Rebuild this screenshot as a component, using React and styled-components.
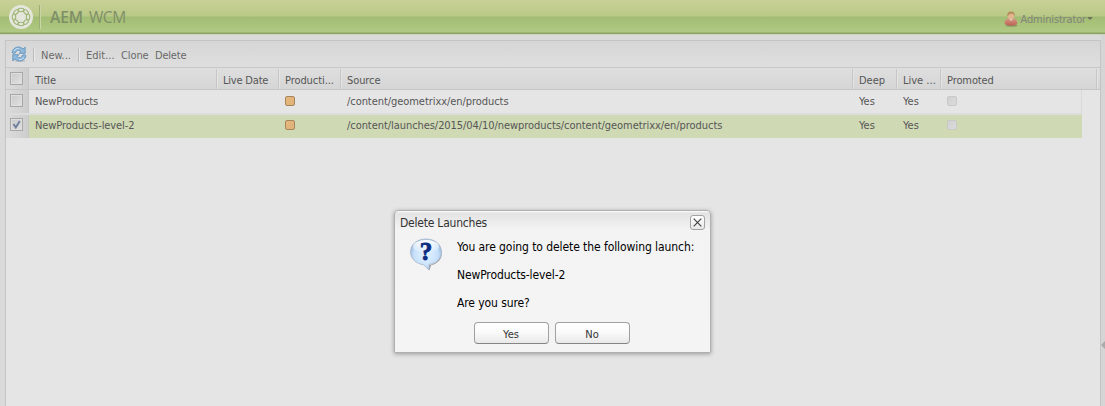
import React from 'react';
import styled, { createGlobalStyle } from 'styled-components';

const Global = createGlobalStyle`
  *, *::before, *::after { box-sizing: border-box; }
  body {
    margin: 0;
    background: #dadada;
    overflow: hidden;
    font: 11px/14px "DejaVu Sans Condensed", "DejaVu Sans", sans-serif;
    font-stretch: condensed;
    color: #565656;
  }
`;

const Page = styled.div`
  height: 406px;
  display: flex;
  flex-direction: column;
`;

const Header = styled.header`
  height: 35px;
  flex: none;
  display: flex;
  align-items: center;
  padding: 0 12px 1px 9px;
  background: linear-gradient(#c9d096 0, #b9c987 16px, #a2bd73 17px, #b0c984 32px, #8ba366 33px, #8ba366 34px, #cbd3bd 34px);
`;

const HeaderRule = styled.i`
  width: 2px;
  height: 24px;
  margin: 0 9px 0 6px;
  background: #9cae75;
  border-right: 1px solid #c9d5a5;
`;

const Brand = styled.h1`
  flex: 1;
  margin: 0;
  display: flex;
  gap: 6px;
  font: 400 15.5px/20px "Open Sans", "Noto Sans", sans-serif;
  color: #7f8f68;
  b { font-weight: 600; letter-spacing: -0.1px; }
  span { letter-spacing: -0.4px; }
`;

const User = styled.div`
  display: flex;
  align-items: center;
  color: #83837b;
  margin-top: 3px;
  letter-spacing: ${p => p.$track}px;
  svg { display: block; }
  span { margin: 3px 1px 0 3px; }
`;

const Caret = styled.i`
  border: 3px solid transparent;
  border-top-color: #6c725c;
  border-bottom: 0;
`;

const Workspace = styled.div`
  flex: 1;
  display: flex;
  padding: 5px 0 0 5px;
`;

const Panel = styled.main`
  width: 1096px;
  border: 1px solid #c4c4c4;
  border-bottom: 0;
  background: #e5e5e5;
`;

const Splitter = styled.aside`
  flex: 1;
  margin-top: -5px;
  background: #d5d5d5;
  display: flex;
  padding-top: 306px;
`;

const SplitterArrow = styled.i`
  width: 4px;
  height: 8px;
  border: 4px solid transparent;
  border-right-color: #aaa;
  border-left: 0;
`;

const Toolbar = styled.div`
  height: 27px;
  display: flex;
  align-items: center;
  padding: 0 0 0 5px;
  background: linear-gradient(#d6d6d6, #dedede);
  border-bottom: 1px solid #c8c8c8;
  color: #696969;
`;

const ToolbarRule = styled.i`
  width: 2px;
  height: 14px;
  margin: 2px 6px 0 ${p => p.$before}px;
  background: #bcbcbc;
  border-right: 1px solid #e9e9e9;
`;

const ToolButton = styled.span`
  width: ${p => p.$width}px;
  padding-top: 4px;
  white-space: nowrap;
  letter-spacing: ${p => p.$track || 0}px;
`;

const columns = '23px 188px 62px 62px 512px 44px 44px';

const HeadRow = styled.div`
  height: 22px;
  display: grid;
  grid-template-columns: ${columns} 156px 1fr;
  background: linear-gradient(#dfdfdf, #d5d5d5);
  border-bottom: 1px solid #c6c6c6;
`;

const HeadCell = styled.div`
  display: flex;
  align-items: center;
  padding: 3px 0 0 6px;
  margin-top: 1px;
  white-space: nowrap;
  border-right: 1px solid #c6c6c6;
  box-shadow: 1px 0 #e4e4e4;
  letter-spacing: ${p => p.$track || 0}px;
`;

const Row = styled.div`
  height: ${p => (p.$selected ? 23 : 25)}px;
  width: 1076px;
  display: grid;
  grid-template-columns: ${columns} 1fr;
  background: ${p => (p.$selected ? '#cfd9b4' : '#e5e5e5')};
  border-bottom: ${p => (p.$selected ? 0 : 2)}px solid #dcdcdc;
  border-right: 1px solid ${p => (p.$selected ? '#cfd9b4' : '#d9d9d9')};
`;

const Cell = styled.div`
  display: flex;
  align-items: flex-start;
  padding: ${p => (p.$selected ? 4 : 5)}px 0 0 6px;
  white-space: nowrap;
  letter-spacing: ${p => p.$track || 0}px;
`;

const CheckCell = styled.div`
  padding: ${p => p.$top}px 0 0 4px;
  background: linear-gradient(90deg, #dcdcdc, #cdcdcd);
  border-right: 1px solid #c6c6c6;
`;

const Checkbox = styled.div`
  width: 13px;
  height: 13px;
  border: 1px solid #a8a8a8;
  box-shadow: inset 0 0 0 1px #dedede;
  background: linear-gradient(135deg, #c9c9c9, #e2e2e2);
  svg { display: block; }
`;

const Flag = styled.div`
  width: 10px;
  height: 10px;
  margin-top: 1px;
  border: 1px solid ${p => (p.$on ? '#a7865e' : '#c8c8c8')};
  border-radius: 2px;
  background: ${p => (p.$on ? 'linear-gradient(135deg, #e5b97d, #e0b078)' : 'linear-gradient(135deg, #d1d1d1, #dbdbdb)')};
`;

const Dialog = styled.section`
  position: absolute;
  left: 394px;
  top: 210px;
  width: 317px;
  height: 143px;
  border: 1px solid #b0b0b0;
  border-radius: 4px 4px 1px 1px;
  background: linear-gradient(#fff 0, #e3e3e3 2px, #f3f3f3 18px, #f4f4f4);
  box-shadow: 0 1px 4px #999;
  color: #000;
`;

const DialogTitle = styled.header`
  height: 23px;
  display: flex;
  align-items: center;
  justify-content: space-between;
  padding: 0 5px 0 5px;
  font-size: 12px;
  color: #333;
  letter-spacing: ${p => p.$track}px;
  span { padding-top: 1px; }
`;

const CloseButton = styled.button`
  width: 15px;
  height: 15px;
  padding: 0;
  border: 1px solid #a3a3a3;
  border-radius: 3px;
  background: linear-gradient(#fff, #e8e8e8);
  svg { display: block; margin: 2px; }
`;

const DialogBody = styled.div`
  display: flex;
  height: 88px;
  padding: 3px 0 0 14px;
  font-size: 12px;
  > svg { margin-top: 1px; flex: none; }
`;

const Message = styled.div`
  margin: 3px 0 0 14px;
`;

const Line = styled.p`
  margin: 0 0 14px;
  white-space: nowrap;
  letter-spacing: ${p => p.$track || 0}px;
`;

const Actions = styled.footer`
  display: flex;
  justify-content: center;
  gap: 6px;
  padding-right: 2px;
`;

const Button = styled.button`
  width: 75px;
  height: 22px;
  padding: 4px 0 0;
  border: 1px solid #a0a0a0;
  border-bottom-color: #858585;
  border-radius: 4px;
  background: linear-gradient(#fff, #fafafa 45%, #e9e9e9);
  font: inherit;
  color: #333;
`;

const Logo = () => (
  <svg width="24" height="24" viewBox="0 0 24 24">
    <circle cx="12" cy="12" r="12" fill="#e4e6dc" />
    <g fill="none" stroke="#9fb675" strokeWidth="1.100">
      {[0, 45, 90, 135, 180, 225, 270, 315].map(a => (
        <ellipse key={a} cx="12" cy="5" rx="3" ry="1.700" transform={`rotate(${a} 12 12)`} />
      ))}
    </g>
  </svg>
);

const UserIcon = () => (
  <svg width="14" height="16" viewBox="0 0 14 16">
    <defs>
      <linearGradient id="coat" x2="0" y2="1">
        <stop stopColor="#d89a85" /><stop offset="1" stopColor="#ba5e50" />
      </linearGradient>
    </defs>
    <ellipse cx="7.500" cy="14.500" rx="6" ry="1.300" fill="#8c9a68" />
    <path d="M.8 13V11Q1 8.300 4.200 7.500h5.600q3 .8 3.300 3.500V13Q11 14.800 7 14.800T.8 13z" fill="url(#coat)" />
    <path d="M5 7.800h4L7.200 10z" fill="#e0d9cc" />
    <ellipse cx="7" cy="4.600" rx="3.400" ry="3.800" fill="#dfb68e" />
    <path d="M3.300 5.500Q2.800.4 7 .4t3.700 5.100Q9.700 3 8 2.600 5 2.600 3.300 5.500z" fill="#b48c5c" />
  </svg>
);

const RefreshIcon = () => (
  <svg width="16" height="16" viewBox="0 0 16 16">
    <ellipse cx="9" cy="15" rx="5.500" ry="1" fill="#c0c3c6" />
    <g fill="#90badd" stroke="#5c8db8" strokeWidth=".8" strokeLinejoin="round">
      <path d="M1 6.500Q2.200 1.500 7 1 10 .8 12 3L14.200 1.200V7.300H8.200L10 5.500Q8.300 3.800 6.500 4.300 4.800 5 4.300 7 2.200 8 1 6.500z" />
      <path d="M15 9.700Q13.800 14.500 9 15 6 15.200 4 13L1.800 14.800V8.700H7.800L6 10.500Q7.700 12.200 9.500 11.700 11.200 11 11.700 9 13.800 8 15 9.700z" />
    </g>
    <path d="M3 5Q4.500 2.200 8 2.300M13 11.500Q11.500 13.800 8 13.700" fill="none" stroke="#c8dfef" />
  </svg>
);

const QuestionIcon = () => (
  <svg width="34" height="34" viewBox="0 0 34 34">
    <defs>
      <radialGradient id="bubble" cx=".5" cy=".5" r=".6">
        <stop stopColor="#e5f4ff" /><stop offset=".65" stopColor="#c6e0fa" /><stop offset="1" stopColor="#86a6d0" />
      </radialGradient>
      <linearGradient id="gloss" x2="0" y2="1">
        <stop stopColor="#fff" /><stop offset="1" stopColor="#fff" stopOpacity=".1" />
      </linearGradient>
    </defs>
    <path d="M18 28l2.500 4.500 1.500-5Q33.500 24 33 14 31 25 18 28z" fill="#8b8d93" opacity=".8" />
    <path d="M17 1C8 1 1.500 6.500 1.500 14c0 7 6 11.800 13 12.800l5.500 5.200V26.500C28 25 32.500 20.500 32.500 14 32.500 6.500 26 1 17 1z" fill="url(#bubble)" stroke="#a8b5c6" strokeWidth=".8" />
    <ellipse cx="17" cy="8.500" rx="13" ry="6.500" fill="url(#gloss)" />
    <text x="17" y="22" textAnchor="middle" fontFamily="Liberation Serif, serif" fontWeight="700" fontSize="25" fill="#0b2a80" stroke="#0b2a80" strokeWidth=".8">?</text>
  </svg>
);

const headings = [
  { label: 'Title', track: 0 },
  { label: 'Live Date', track: -0.2 },
  { label: 'Producti...', track: -0.08 },
  { label: 'Source', track: -0.1 },
  { label: 'Deep', track: 0 },
  { label: 'Live ...', track: 0 },
  { label: 'Promoted', track: -0.1 },
];

const rows = [
  { title: 'NewProducts', source: '/content/geometrixx/en/products' },
  { title: 'NewProducts-level-2', source: '/content/launches/2015/04/10/newproducts/content/geometrixx/en/products', selected: true },
];

export default function App() {
  return (
    <Page>
      <Global />
      <Header>
        <Logo />
        <HeaderRule />
        <Brand><b>AEM</b><span>WCM</span></Brand>
        <User $track={-0.15}><UserIcon /><span>Administrator</span><Caret /></User>
      </Header>
      <Workspace>
        <Panel>
          <Toolbar>
            <RefreshIcon />
            <ToolbarRule $before={6} />
            <ToolButton $width={37}>New...</ToolButton>
            <ToolbarRule $before={0} />
            <ToolButton $width={35}>Edit...</ToolButton>
            <ToolButton $width={34} $track={-0.1}>Clone</ToolButton>
            <ToolButton $width={40} $track={-0.2}>Delete</ToolButton>
          </Toolbar>
          <HeadRow>
            <CheckCell $top={4}><Checkbox /></CheckCell>
            {headings.map(h => (
              <HeadCell key={h.label} $track={h.track}>{h.label}</HeadCell>
            ))}
          </HeadRow>
          {rows.map(r => (
            <Row key={r.title} $selected={r.selected}>
              <CheckCell $top={r.selected ? 3 : 4}>
                <Checkbox>
                  {r.selected && (
                    <svg width="11" height="11" viewBox="0 0 11 11">
                      <path d="M2.500 5l2.300 3.500L8.800 2" fill="none" stroke="#7180a0" strokeWidth="2" />
                    </svg>
                  )}
                </Checkbox>
              </CheckCell>
              <Cell $selected={r.selected} $track={-0.1}>{r.title}</Cell>
              <Cell />
              <Cell $selected={r.selected}><Flag $on /></Cell>
              <Cell $selected={r.selected} $track={-0.06}>{r.source}</Cell>
              <Cell $selected={r.selected}>Yes</Cell>
              <Cell $selected={r.selected}>Yes</Cell>
              <Cell $selected={r.selected}><Flag /></Cell>
            </Row>
          ))}
        </Panel>
        <Splitter><SplitterArrow /></Splitter>
      </Workspace>
      <Dialog>
        <DialogTitle $track={-0.22}>
          <span>Delete Launches</span>
          <CloseButton>
            <svg width="9" height="9" viewBox="0 0 9 9"><path d="M.7.7l7.600 7.600M8.300.7L.7 8.300" stroke="#444" strokeWidth="1.200" /></svg>
          </CloseButton>
        </DialogTitle>
        <DialogBody>
          <QuestionIcon />
          <Message>
            <Line $track={-0.08}>You are going to delete the following launch:</Line>
            <Line $track={-0.12}>NewProducts-level-2</Line>
            <Line $track={-0.09}>Are you sure?</Line>
          </Message>
        </DialogBody>
        <Actions><Button>Yes</Button><Button>No</Button></Actions>
      </Dialog>
    </Page>
  );
}
